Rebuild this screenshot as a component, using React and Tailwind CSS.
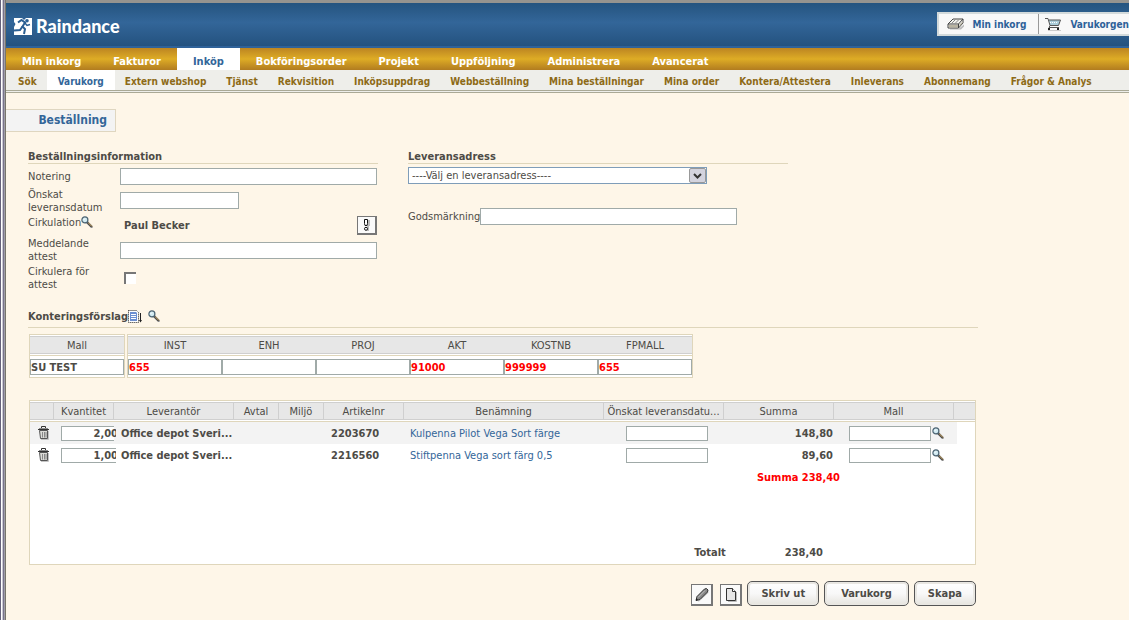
import React, { useState } from 'react';

const mainTabs = ['Min inkorg', 'Fakturor', 'Inköp', 'Bokföringsorder', 'Projekt', 'Uppföljning', 'Administrera', 'Avancerat'];

const subTabs = [
  'Sök',
  'Varukorg',
  'Extern webshop',
  'Tjänst',
  'Rekvisition',
  'Inköpsuppdrag',
  'Webbeställning',
  'Mina beställningar',
  'Mina order',
  'Kontera/Attestera',
  'Inleverans',
  'Abonnemang',
  'Frågor & Analys',
];

const accounts = [
  { name: 'INST', value: '655' },
  { name: 'ENH', value: '' },
  { name: 'PROJ', value: '' },
  { name: 'AKT', value: '91000' },
  { name: 'KOSTNB', value: '999999' },
  { name: 'FPMALL', value: '655' },
];

const items = [
  { id: 1, qty: '2,00', supplier: 'Office depot Sveri...', article: '2203670', name: 'Kulpenna Pilot Vega Sort färge', sum: '148,80' },
  { id: 2, qty: '1,00', supplier: 'Office depot Sveri...', article: '2216560', name: 'Stiftpenna Vega sort färg 0,5', sum: '89,60' },
];

const inputClass = 'block border border-[#a0aaa8] bg-white outline-none';

const LogoMark = () => (
  <svg width="18" height="17" viewBox="0 0 18 17" aria-hidden="true">
    <path d="M0 0h18v17H0z" fill="#fff" />
    <circle cx="13" cy="2.800" r="1.800" fill="#2b5f93" />
    <path d="M4 4.500L7.500 2l3.500 2.500L8.500 8.500l2.500 2.500-1 5" fill="none" stroke="#2b5f93" strokeWidth="2" />
    <path d="M10.500 4.500l2.500 3 3-1" fill="none" stroke="#2b5f93" strokeWidth="1.500" />
    <path d="M8.500 8.500L6 12l-6 .500" fill="none" stroke="#2b5f93" strokeWidth="2" />
    <path d="M8 0h4l-2 2zM0 4l1.500 2L0 9z" fill="#2b5f93" />
  </svg>
);

const TrayIcon = () => (
  <svg width="18" height="12" viewBox="0 0 18 12" aria-hidden="true">
    <path d="M3 11.500h11l3-3v-2l-5 4H3z" fill="#bbb" />
    <path d="M1 6L6 1h10v4l-4.500 5H1z" fill="#f4f4f0" stroke="#444" />
    <path d="M1 6h10.500L16 1M11.500 6v4" fill="none" stroke="#444" />
    <path d="M4.500 5.500l4-4M8 5.500l4-4" stroke="#888" />
    <path d="M2 7h9v2.500H2zM12.500 6.500l3-3v1.500l-3 3.500z" fill="#b9b4a2" />
  </svg>
);

const CartIcon = () => (
  <svg width="17" height="14" viewBox="0 0 17 14" aria-hidden="true">
    <path d="M3 13.500h13" stroke="#ccc" />
    <path d="M3.500 3h11.500l-1 5H5z" fill="#a9cbd8" />
    <path d="M0 1.500h3l2 7h8.500L15.500 3H4M5 8.500l-1 2h10" fill="none" stroke="#555" />
    <path d="M5 5.500h8" stroke="#fff" strokeDasharray="1 1" />
    <path d="M3 11h2v2H3zM12 11h2v2h-2z" fill="#222" />
  </svg>
);

const SearchIcon = () => (
  <svg width="12" height="12" viewBox="0 0 12 12" aria-hidden="true">
    <path d="M6 8l4 4h2v-1L8 7z" fill="#bbb" />
    <path d="M6 6l5 5" stroke="#444" strokeWidth="2.200" />
    <path d="M7 6.500l4 4" stroke="#dfb870" strokeWidth="1" />
    <circle cx="3.900" cy="3.900" r="3" fill="#d2ebf2" stroke="#4b6372" strokeWidth="1.200" />
    <path d="M2.500 4l1.500-1.500" stroke="#fff" />
  </svg>
);

const TemplateIcon = () => (
  <svg width="14" height="13" viewBox="0 0 14 13" aria-hidden="true">
    <path d="M.5.500h8l2 2v10H.5z" fill="#fff" stroke="#222" strokeDasharray="1 1" />
    <path d="M2 2h6l1 1v8H2z" fill="#6d8fd0" />
    <path d="M3 4.500h5M3 6.500h5M3 8.500h5" stroke="#fff" />
    <path d="M12.500 3v8" stroke="#222" />
    <path d="M11 10h3l-1.500 2.500z" fill="#222" />
  </svg>
);

const TrashIcon = () => (
  <svg width="12" height="14" viewBox="0 0 12 14" aria-hidden="true">
    <path d="M10.500 5v8.500H3" fill="none" stroke="#c4c4c4" />
    <path d="M1.500 4.500h8v8h-7z" fill="#dcdcd8" stroke="#555" />
    <path d="M4.500 6v5.500M6.500 6v5.500M8 6v5.500" stroke="#888" />
    <path d="M0 3.500h11" stroke="#333" />
    <path d="M1 2.500h9" stroke="#888" />
    <path d="M3.500 2V.500h4V2" fill="none" stroke="#333" />
  </svg>
);

const AlertIcon = () => (
  <svg width="8" height="14" viewBox="0 0 8 14" aria-hidden="true">
    <path d="M4 2h3v6H6v5H4z" fill="#bbb" />
    <path d="M1.500 1.500h3v4l-.5 2H2l-.5-2z" fill="#fff" stroke="#111" />
    <circle cx="3" cy="10.800" r="1.500" fill="#fff" stroke="#111" />
  </svg>
);

const PencilIcon = () => (
  <svg width="16" height="16" viewBox="0 0 16 16" aria-hidden="true">
    <path d="M4 14l10-9" stroke="#ccc" strokeWidth="2" />
    <path d="M2 13.500l1-4 7.500-7.500 2-.500 1.500 1.500-.500 2L6 12.500z" fill="#888" stroke="#333" />
    <path d="M4 10.500l7-7" stroke="#c4c4c4" />
    <path d="M2 13.500l.500-2L4 13z" fill="#111" />
  </svg>
);

const PageIcon = () => (
  <svg width="12" height="14" viewBox="0 0 12 14" aria-hidden="true">
    <path d="M3 13.500h8.500V4" fill="none" stroke="#bbb" />
    <path d="M1.500.500h6l3 3v9h-9z" fill="#e6e6e6" stroke="#333" />
    <path d="M7.500.500v3h3" fill="#fff" stroke="#333" />
  </svg>
);

const SearchButton = ({ label }) => (
  <button type="button" aria-label={label} className="block">
    <SearchIcon />
  </button>
);

const IconButton = ({ label, className, children }) => (
  <button
    type="button"
    aria-label={label}
    className={`flex items-center justify-center border border-r-2 border-b-2 border-[#777] bg-[#fafafa] ${className}`}
  >
    {children}
  </button>
);

const ActionButton = ({ className, children }) => (
  <button
    type="button"
    className={`h-[25px] rounded-[5px] border border-[#555] bg-linear-to-b from-white via-[#f8f8f8] to-[#e6e4de] font-bold shadow-[inset_0_0_0_2px_#e9e7e2] ${className}`}
  >
    {children}
  </button>
);

const SectionTitle = ({ children }) => (
  <h2 className="flex h-[14px] items-end border-b border-[#dfd6bb] font-bold">{children}</h2>
);

const Header = () => (
  <header className="flex h-[45px] items-start justify-between overflow-hidden border-b-2 border-[#2f6299] bg-linear-to-b from-[#25547f] via-[#336699] via-45% to-[#24527f] pl-2">
    <a href="#" className="flex items-center gap-1 pt-3 font-[Lato] text-[18px] leading-[22px] font-black text-white">
      <LogoMark />
      Raindance
    </a>
    <div className="mt-[9px] flex h-6 border-2 border-r-0 border-[#d3dadb] bg-[#f8f8f8] text-[10px] font-bold whitespace-nowrap text-[#2d6199]">
      <a href="#" className="flex items-center gap-2 border-r border-[#999] pr-3 pl-2">
        <TrayIcon />
        Min inkorg
      </a>
      <a href="#" className="flex items-center gap-2 pl-1.5">
        <CartIcon />
        Varukorgen
      </a>
    </div>
  </header>
);

const OrderForm = () => {
  const [circulate, setCirculate] = useState(false);

  return (
    <form className="flex gap-[30px]">
      <section className="w-[350px]">
        <SectionTitle>Beställningsinformation</SectionTitle>
        <div className="mt-1 grid grid-cols-[92px_1fr] items-center gap-y-0.5">
          <label htmlFor="note">Notering</label>
          <input id="note" className={`${inputClass} h-[17px] w-[257px]`} />
          <label htmlFor="date" className="pt-px">Önskat leveransdatum</label>
          <input id="date" className={`${inputClass} h-[17px] w-[119px]`} />
          <div className="flex items-start self-start">
            Cirkulation
            <SearchButton label="Sök cirkulation" />
          </div>
          <div className="flex w-[257px] items-center justify-between pl-1">
            <b>Paul Becker</b>
            <IconButton label="Visa cirkulation" className="h-[19px] w-5">
              <AlertIcon />
            </IconButton>
          </div>
          <label htmlFor="message" className="w-16">Meddelande attest</label>
          <input id="message" className={`${inputClass} h-[17px] w-[257px]`} />
          <label htmlFor="circulate" className="w-16">Cirkulera för attest</label>
          <input
            id="circulate"
            type="checkbox"
            checked={circulate}
            onChange={(e) => setCirculate(e.target.checked)}
            className="ml-1 h-3 w-3 appearance-none border-t-2 border-l-2 border-[#777] bg-white checked:bg-[#336699]"
          />
        </div>
      </section>

      <section className="w-[380px]">
        <SectionTitle>Leveransadress</SectionTitle>
        <div className="relative mt-[3px] w-[299px]">
          <select aria-label="Leveransadress" className="block h-[17px] w-full appearance-none border border-[#7f9db9] bg-white pl-[3px]">
            <option>----Välj en leveransadress----</option>
          </select>
          <span className="pointer-events-none absolute inset-y-px right-px flex w-[17px] items-center justify-center rounded-xs border border-[#999] bg-[#d3d3de]">
            <svg width="9" height="6" viewBox="0 0 9 6" aria-hidden="true">
              <path d="M1 1l3.500 3.500L8 1" fill="none" stroke="#333" strokeWidth="2" />
            </svg>
          </span>
        </div>
        <div className="mt-6 flex items-center">
          <label htmlFor="goods">Godsmärkning</label>
          <input id="goods" className={`${inputClass} h-[17px] w-[257px]`} />
        </div>
      </section>
    </form>
  );
};

const AccountCell = ({ name, value, className = '' }) => (
  <div className="flex-1">
    <label htmlFor={`acc-${name}`} className="mt-px flex h-[18px] items-center justify-center border-y border-[#cfcfcf] bg-[#e7e7e7]">
      {name}
    </label>
    <div className="mt-px border-t border-[#dfd6bb] pt-[3px] pb-0.5">
      <input id={`acc-${name}`} defaultValue={value} className={`${inputClass} h-[16px] w-full font-bold ${className}`} />
    </div>
  </div>
);

const Accounting = () => (
  <section>
    <div className="flex h-[21px] items-start border-b border-[#dfd6bb] pt-[3px]">
      <h2 className="font-bold">Konteringsförslag</h2>
      <button type="button" aria-label="Mallar" className="mr-1.5 block">
        <TemplateIcon />
      </button>
      <SearchButton label="Sök kontering" />
    </div>
    <div className="mt-1.5 ml-px flex gap-0.5">
      <div className="flex w-24 border border-[#dfd6bb] bg-white">
        <AccountCell name="Mall" value="SU TEST" />
      </div>
      <div className="flex w-[566px] border border-[#dfd6bb] bg-white">
        {accounts.map((account) => (
          <AccountCell key={account.name} name={account.name} value={account.value} className="text-[#f00]" />
        ))}
      </div>
    </div>
  </section>
);

const columns = [
  { title: '', width: 'w-6' },
  { title: 'Kvantitet', width: 'w-[60px]' },
  { title: 'Leverantör', width: 'w-[120px]' },
  { title: 'Avtal', width: 'w-[45px]' },
  { title: 'Miljö', width: 'w-[45px]' },
  { title: 'Artikelnr', width: 'w-20' },
  { title: 'Benämning', width: 'w-[200px]' },
  { title: 'Önskat leveransdatu...', width: 'w-[120px]' },
  { title: 'Summa', width: 'w-[110px]' },
  { title: 'Mall', width: 'w-[120px]' },
  { title: '', width: '' },
];

const ItemRow = ({ item, shaded }) => (
  <tr className={`h-[22px] ${shaded ? '[&>td]:bg-[#f3f3f3]' : ''}`}>
    <td className="pl-2">
      <button type="button" aria-label="Ta bort" className="block">
        <TrashIcon />
      </button>
    </td>
    <td className="pl-[7px]">
      <div className="w-[55px] overflow-hidden">
        <input aria-label="Kvantitet" defaultValue={item.qty} className={`${inputClass} h-[15px] w-[58px] text-right font-bold`} />
      </div>
    </td>
    <td className="pl-[7px] font-bold whitespace-nowrap">{item.supplier}</td>
    <td></td>
    <td></td>
    <td className="pl-[7px] font-bold">{item.article}</td>
    <td className="pl-1.5">
      <a href="#" className="text-[#336699]">{item.name}</a>
    </td>
    <td className="pl-[22px]">
      <input aria-label="Önskat leveransdatum" className={`${inputClass} h-[15px] w-[82px]`} />
    </td>
    <td className="pr-px text-right font-bold">{item.sum}</td>
    <td className="pl-[15px]">
      <div className="flex items-center gap-px">
        <input aria-label="Mall" className={`${inputClass} h-[15px] w-[82px]`} />
        <SearchButton label="Sök mall" />
      </div>
    </td>
    <td className={shaded ? 'border-r-[18px] border-white' : ''}></td>
  </tr>
);

const ItemTable = () => (
  <section className="mt-[22px] ml-px w-[947px] border border-[#dfd6bb] bg-white pt-px">
    <table className="w-full table-fixed border-separate border-spacing-0">
      <thead>
        <tr className="h-[18px]">
          {columns.map((column, index) => (
            <th
              key={index}
              className={`border-y border-[#cfcfcf] bg-[#e7e7e7] font-normal whitespace-nowrap ${index < columns.length - 1 ? 'border-r' : ''} ${column.width}`}
            >
              {column.title}
            </th>
          ))}
        </tr>
        <tr>
          <td colSpan={11} className="h-0.5 border-b border-[#dfd6bb]"></td>
        </tr>
      </thead>
      <tbody>
        {items.map((item, index) => (
          <ItemRow key={item.id} item={item} shaded={index % 2 === 0} />
        ))}
        <tr className="h-[22px]">
          <td colSpan={10} className="pr-[114px] text-right font-bold text-[#f00]">Summa 238,40</td>
          <td></td>
        </tr>
      </tbody>
    </table>
    <div className="mt-[58px] flex justify-end gap-[59px] pr-[152px] pb-[5px] font-bold">
      <span>Totalt</span>
      <span>238,40</span>
    </div>
  </section>
);

const App = () => {
  const [mainTab, setMainTab] = useState('Inköp');
  const [subTab, setSubTab] = useState('Varukorg');

  return (
    <div className="flex min-h-screen overflow-x-hidden bg-[#fef6e8] font-['DejaVu_Sans_Condensed','DejaVu_Sans',sans-serif] text-[11px] leading-[13px] text-[#4d4b46]">
      <div className="w-1.5 shrink-0 bg-[linear-gradient(90deg,#66617a_1px,#fff_1px,#fff_2px,#cbc8d4_2px,#cbc8d4_3px,#77738a_3px,#77738a_4px,#a09da8_4px,#a09da8_5px,#77756b_5px)]"></div>
      <div className="min-w-0 flex-1 border-t-3 border-[#96948f]">
        <Header />

        <nav className="flex h-[22px] bg-linear-to-b from-[#bc8522] via-[#deac25] to-[#b17c20] font-bold whitespace-nowrap text-white">
          {mainTabs.map((tab) => (
            <button
              key={tab}
              type="button"
              onClick={() => setMainTab(tab)}
              className={`px-4 pt-1 ${tab === mainTab ? 'bg-white text-[#336699]' : ''}`}
            >
              {tab}
            </button>
          ))}
        </nav>

        <nav className="flex h-[23px] border-b-3 border-double border-[#aaa996] bg-[#eeeeea] pl-0.5 text-[10px] font-bold whitespace-nowrap text-[#8d6a16]">
          {subTabs.map((tab) => (
            <button
              key={tab}
              type="button"
              onClick={() => setSubTab(tab)}
              className={`pt-0.5 ${tab === subTab ? 'bg-white px-[11px] text-[#336699]' : 'px-2.5'}`}
            >
              {tab}
            </button>
          ))}
        </nav>

        <main className="pb-3">
          <h1 className="mt-4 flex h-[23px] w-[110px] items-center justify-end border border-l-0 border-[#dfd6c0] bg-[#f3f3f3] pr-2 text-[12px] font-bold text-[#336699]">
            Beställning
          </h1>
          <div className="mt-[18px] w-[972px] pl-[22px]">
            <OrderForm />
            <div className="mt-4">
              <Accounting />
            </div>
            <ItemTable />
            <div className="mt-4 flex items-end justify-end gap-[5px] pr-0.5">
              <IconButton label="Redigera" className="mr-0.5 h-[22px] w-[22px]">
                <PencilIcon />
              </IconButton>
              <IconButton label="Ny" className="h-[22px] w-[22px]">
                <PageIcon />
              </IconButton>
              <ActionButton className="px-[13px]">Skriv ut</ActionButton>
              <ActionButton className="px-4">Varukorg</ActionButton>
              <ActionButton className="px-[13px]">Skapa</ActionButton>
            </div>
          </div>
        </main>
      </div>
    </div>
  );
};

export default App;
